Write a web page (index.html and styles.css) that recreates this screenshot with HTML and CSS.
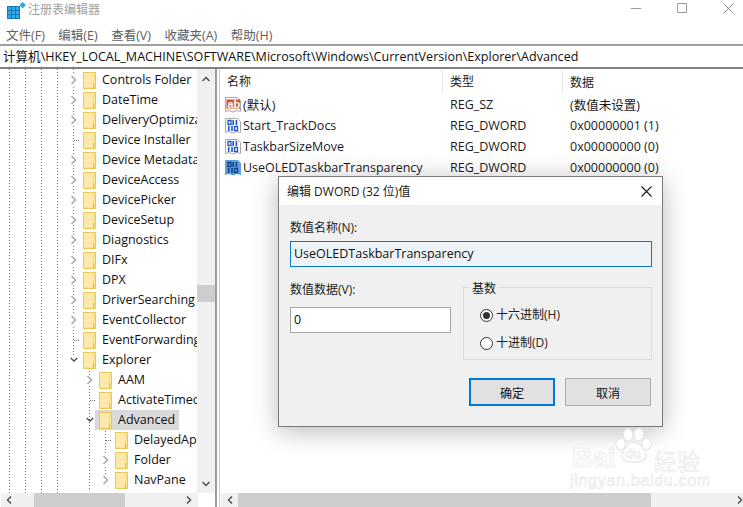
FILE: index.html
```html
<!DOCTYPE html>
<html lang="zh-CN">
<head>
<meta charset="utf-8">
<title>注册表编辑器</title>
<link rel="stylesheet" href="styles.css">
</head>
<body>
<svg class="defs" width="0" height="0">
  <defs>
    <symbol id="folder" viewBox="0 0 13 17">
      <path d="M.5.5H12.5V16.5H.5Z" fill="#fde08e" stroke="#ecc655"/>
      <path d="M1 1H10V15H1Z" fill="#fee9ab"/>
      <path d="M10.5 11V16" stroke="#e5b94a"/>
    </symbol>
    <symbol id="right" viewBox="0 0 8 10"><path d="M1.5 1 5.5 5 1.5 9" fill="none" stroke="#a6a6a6" stroke-width="1.5"/></symbol>
    <symbol id="down" viewBox="0 0 10 8"><path d="M1 1.5 5 5.5 9 1.5" fill="none" stroke="#404040" stroke-width="1.5"/></symbol>
    <symbol id="bin" viewBox="0 0 16 16">
      <path d="M.5.5H12.500L15.500 3.500V14.500L12 13.500 8 15 4 13.500.5 14.500Z" fill="#fff" stroke="#a8a8a8"/>
      <path d="M3 2.500H6V6.500H3ZM9.500 8.500H12.500V12.500H9.500Z" fill="none" stroke="#1f55c8" stroke-width="1.300"/>
      <path d="M7.400 2H9V7H7.400ZM10.600 2H12.200V7H10.600ZM2.900 8H4.500V13H2.900ZM6.200 8H7.800V13H6.200Z" fill="#1f55c8"/>
    </symbol>
    <symbol id="binsel" viewBox="0 0 16 16">
      <path d="M0 0H13L16 3V15L12 14 8 15.500 4 14 0 15Z" fill="#5d9fe0"/>
      <path d="M3 2.500H6V6.500H3ZM9.500 8.500H12.500V12.500H9.500Z" fill="none" stroke="#123f8a" stroke-width="1.300"/>
      <path d="M7.400 2H9V7H7.400ZM10.600 2H12.200V7H10.600ZM2.900 8H4.500V13H2.900ZM6.200 8H7.800V13H6.200Z" fill="#123f8a"/>
    </symbol>
  </defs>
</svg>
<div class="window">
  <header class="titlebar">
    <svg class="appicon" width="19" height="17" viewBox="0 0 19 17">
      <path d="M0 4H13V17H0Z" fill="#0f78c0"/>
      <path d="M1 5H4V8H1ZM5 5H8V8H5ZM9 5H12V8H9ZM1 9H4V12H1ZM5 9H8V12H5ZM9 9H12V12H9ZM1 13H4V16H1ZM5 13H8V16H5ZM9 13H12V16H9Z" fill="#35a9e2"/>
      <path d="M15.500 0 19 3 15.500 6.500 12.500 3Z" fill="#2fa5dc"/>
    </svg>
    <span class="apptitle">注册表编辑器</span>
    <div class="winctl">
      <svg width="11" height="11" viewBox="0 0 11 11"><path d="M0 5.500H10" stroke="#9a9a9a"/></svg>
      <svg width="11" height="11" viewBox="0 0 11 11"><path d="M.5.500H9.500V9.500H.5Z" fill="none" stroke="#9a9a9a"/></svg>
      <svg width="11" height="11" viewBox="0 0 11 11"><path d="M.5.500 10.500 10.500M10.500.500.5 10.500" stroke="#8c8c8c"/></svg>
    </div>
  </header>
  <nav class="menubar">
    <span>文件(F)</span><span>编辑(E)</span><span>查看(V)</span><span>收藏夹(A)</span><span>帮助(H)</span>
  </nav>
  <div class="pathbar">计算机\HKEY_LOCAL_MACHINE\SOFTWARE\Microsoft\Windows\CurrentVersion\Explorer\Advanced</div>
  <main class="panes">
    <section class="treepane">
      <div class="treebody">
        <ul class="tree">
          <li class="lv0"><svg class="chev"><use href="#right"/></svg><svg class="fld"><use href="#folder"/></svg><span>Controls Folder</span></li>
          <li class="lv0"><svg class="chev"><use href="#right"/></svg><svg class="fld"><use href="#folder"/></svg><span>DateTime</span></li>
          <li class="lv0"><svg class="chev"><use href="#right"/></svg><svg class="fld"><use href="#folder"/></svg><span>DeliveryOptimization</span></li>
          <li class="lv0 leaf"><i class="chev"></i><svg class="fld"><use href="#folder"/></svg><span>Device Installer</span></li>
          <li class="lv0"><svg class="chev"><use href="#right"/></svg><svg class="fld"><use href="#folder"/></svg><span>Device Metadata</span></li>
          <li class="lv0"><svg class="chev"><use href="#right"/></svg><svg class="fld"><use href="#folder"/></svg><span>DeviceAccess</span></li>
          <li class="lv0"><svg class="chev"><use href="#right"/></svg><svg class="fld"><use href="#folder"/></svg><span>DevicePicker</span></li>
          <li class="lv0"><svg class="chev"><use href="#right"/></svg><svg class="fld"><use href="#folder"/></svg><span>DeviceSetup</span></li>
          <li class="lv0"><svg class="chev"><use href="#right"/></svg><svg class="fld"><use href="#folder"/></svg><span>Diagnostics</span></li>
          <li class="lv0"><svg class="chev"><use href="#right"/></svg><svg class="fld"><use href="#folder"/></svg><span>DIFx</span></li>
          <li class="lv0"><svg class="chev"><use href="#right"/></svg><svg class="fld"><use href="#folder"/></svg><span>DPX</span></li>
          <li class="lv0"><svg class="chev"><use href="#right"/></svg><svg class="fld"><use href="#folder"/></svg><span>DriverSearching</span></li>
          <li class="lv0"><svg class="chev"><use href="#right"/></svg><svg class="fld"><use href="#folder"/></svg><span>EventCollector</span></li>
          <li class="lv0 leaf"><i class="chev"></i><svg class="fld"><use href="#folder"/></svg><span>EventForwarding</span></li>
          <li class="lv0"><svg class="chev"><use href="#down"/></svg><svg class="fld"><use href="#folder"/></svg><span>Explorer</span></li>
          <li class="lv1"><svg class="chev"><use href="#right"/></svg><svg class="fld"><use href="#folder"/></svg><span>AAM</span></li>
          <li class="lv1 leaf"><i class="chev"></i><svg class="fld"><use href="#folder"/></svg><span>ActivateTimeout</span></li>
          <li class="lv1 sel"><svg class="chev"><use href="#down"/></svg><svg class="fld"><use href="#folder"/></svg><span>Advanced</span></li>
          <li class="lv2 leaf"><i class="chev"></i><svg class="fld"><use href="#folder"/></svg><span>DelayedApps</span></li>
          <li class="lv2"><svg class="chev"><use href="#right"/></svg><svg class="fld"><use href="#folder"/></svg><span>Folder</span></li>
          <li class="lv2"><svg class="chev"><use href="#right"/></svg><svg class="fld"><use href="#folder"/></svg><span>NavPane</span></li>
        </ul>
        <div class="vscroll">
          <svg width="8" height="6" viewBox="0 0 8 6"><path d="M.5 5 4 1.500 7.500 5" fill="none" stroke="#505050" stroke-width="1.500"/></svg>
          <div class="vtrack"><div class="vthumb"></div></div>
          <svg width="8" height="6" viewBox="0 0 8 6"><path d="M.5 1 4 4.500 7.500 1" fill="none" stroke="#505050" stroke-width="1.500"/></svg>
        </div>
      </div>
      <div class="hscroll tree-h">
        <svg width="6" height="8" viewBox="0 0 6 8"><path d="M5 .5 1.500 4 5 7.500" fill="none" stroke="#505050" stroke-width="1.500"/></svg>
        <div class="htrack"><div class="hthumb"></div></div>
        <svg width="6" height="8" viewBox="0 0 6 8"><path d="M1 .5 4.500 4 1 7.500" fill="none" stroke="#505050" stroke-width="1.500"/></svg>
      </div>
    </section>
    <div class="splitter"></div>
    <section class="listpane">
      <div class="listbody">
        <div class="row head"><span class="c1">名称</span><span class="c2">类型</span><span class="c3">数据</span></div>
        <div class="row"><span class="c1"><svg class="vicon" width="16" height="16" viewBox="0 0 16 16"><path d="M.5.5H12.500L15.500 3.500V14.500L12 13.500 8 15 4 13.500.5 14.500Z" fill="#fff" stroke="#a8a8a8"/><path d="M1.500 2.500H15V11.500H1.500Z" fill="#d9512c"/></svg><span class="abmark">ab</span>(默认)</span><span class="c2">REG_SZ</span><span class="c3">(数值未设置)</span></div>
        <div class="row"><span class="c1"><svg class="vicon" width="16" height="16"><use href="#bin"/></svg>Start_TrackDocs</span><span class="c2">REG_DWORD</span><span class="c3">0x00000001 (1)</span></div>
        <div class="row"><span class="c1"><svg class="vicon" width="16" height="16"><use href="#bin"/></svg>TaskbarSizeMove</span><span class="c2">REG_DWORD</span><span class="c3">0x00000000 (0)</span></div>
        <div class="row"><span class="c1"><svg class="vicon" width="16" height="16"><use href="#binsel"/></svg>UseOLEDTaskbarTransparency</span><span class="c2">REG_DWORD</span><span class="c3">0x00000000 (0)</span></div>
      </div>
      <div class="hscroll list-h">
        <svg width="6" height="8" viewBox="0 0 6 8"><path d="M5 .5 1.500 4 5 7.500" fill="none" stroke="#505050" stroke-width="1.500"/></svg>
        <div class="htrack"><div class="hthumb"></div></div>
        <svg width="6" height="8" viewBox="0 0 6 8"><path d="M1 .5 4.500 4 1 7.500" fill="none" stroke="#505050" stroke-width="1.500"/></svg>
      </div>
    </section>
  </main>
</div>

<div class="dialog">
  <div class="dlg-title">
    <span>编辑 DWORD (32 位)值</span>
    <svg width="11" height="11" viewBox="0 0 11 11"><path d="M.5.500 10.500 10.500M10.500.500.5 10.500" stroke="#1a1a1a" stroke-width="1.100"/></svg>
  </div>
  <div class="dlg-body">
    <label class="lbl">数值名称(N):</label>
    <div class="namebox">UseOLEDTaskbarTransparency</div>
    <div class="dlg-mid">
      <div class="datacol">
        <label class="lbl">数值数据(V):</label>
        <div class="databox">0</div>
      </div>
      <fieldset class="base">
        <legend>基数</legend>
        <div class="radio on"><i></i>十六进制(H)</div>
        <div class="radio"><i></i>十进制(D)</div>
      </fieldset>
    </div>
    <div class="dlg-btns">
      <button class="btn primary">确定</button>
      <button class="btn">取消</button>
    </div>
  </div>
</div>

<div class="watermark">
  <svg width="38" height="36" viewBox="0 0 40 38" fill="#fff" stroke="#e6e6e6" stroke-width="1.200">
    <ellipse cx="14" cy="7" rx="5" ry="6.500"/><ellipse cx="25" cy="7" rx="5" ry="6.500"/>
    <ellipse cx="6" cy="17" rx="5" ry="6"/><ellipse cx="33" cy="17" rx="5" ry="6"/>
    <path d="M20 15C27 15 36 28 31 33 27 37 13 37 9 33 4 28 13 15 20 15Z"/>
  </svg>
  <span class="wm-bai">Bai</span><span class="wm-du">du</span><span class="wm-jy">经验</span>
  <span class="wm-url">jingyan.baidu.com</span>
</div>
</body>
</html>
```

FILE: styles.css
```css
* { box-sizing: border-box; }
html, body { margin: 0; height: 100%; }
body {
  width: 743px; height: 507px; overflow: hidden; position: relative; background: #fff;
  font-family: "Open Sans", "Noto Sans CJK SC", sans-serif; font-size: 12.5px; color: #1a1a1a;
}
.defs { position: absolute; }
.window { display: flex; flex-direction: column; height: 507px; }

.titlebar { height: 24px; display: flex; align-items: center; padding-left: 7px; flex: none; }
.appicon { flex: none; margin-top: -3px; }
.apptitle { margin-left: 2px; color: #a0a0a0; font-size: 12px; margin-top: -6px; }
.winctl { margin-left: auto; display: flex; gap: 35px; padding-right: 9px; margin-top: -8px; }

.menubar { height: 22px; display: flex; gap: 13.5px; padding-left: 6px; align-items: center; flex: none; font-size: 12.5px; color: #606060; border-bottom: 2px solid #a0a0a0; }
.pathbar { height: 23px; line-height: 21px; flex: none; padding-left: 3px; font-size: 12.55px; color: #111; white-space: nowrap; border-bottom: 2px solid #7e8284; }

.panes { flex: 1; display: flex; min-height: 0; }
.treepane { width: 215px; flex: none; display: flex; flex-direction: column; }
.treebody { flex: 1; display: flex; min-height: 0; }
.tree {
  list-style: none; margin: 0; padding: 1px 0 0; width: 197px; flex: none; overflow: hidden;
  background:
    repeating-linear-gradient(#777 0 1px, transparent 1px 3px) 9px 0 / 1px 100% no-repeat,
    repeating-linear-gradient(#777 0 1px, transparent 1px 3px) 25px 0 / 1px 100% no-repeat,
    repeating-linear-gradient(#777 0 1px, transparent 1px 3px) 41px 0 / 1px 100% no-repeat,
    repeating-linear-gradient(#777 0 1px, transparent 1px 3px) 57px 0 / 1px 100% no-repeat,
    repeating-linear-gradient(#777 0 1px, transparent 1px 3px) 73px 0 / 1px 292px no-repeat,
    repeating-linear-gradient(#777 0 1px, transparent 1px 3px) 89px 302px / 1px 120px no-repeat,
    repeating-linear-gradient(#777 0 1px, transparent 1px 3px) 105px 362px / 1px 50px no-repeat;
}
.tree li { height: 20px; display: flex; align-items: center; white-space: nowrap; position: relative; }
.lv0 { padding-left: 70px; }
.lv1 { padding-left: 86px; }
.lv2 { padding-left: 102px; }
.chev { width: 8px; height: 10px; flex: none; background: #fff; margin-right: 5px; }
i.chev { background: none; border-bottom: 1px dotted #777; height: 6px; margin-bottom: 5px; margin-left: 4px; width: 5px; margin-right: 4px; }
.fld { width: 13px; height: 17px; flex: none; margin-right: 6px; }
.tree li span { line-height: 20px; color: #111; }
.sel::before { content: ""; position: absolute; left: 95px; top: 0; width: 84px; height: 20px; background: #d9d9d9; }
.sel > * { position: relative; }
.sel .chev { background: none; }

.vscroll { width: 18px; flex: none; background: #f0f0f0; display: flex; flex-direction: column; align-items: center; padding: 7px 0 6px; }
.vtrack { flex: 1; width: 100%; position: relative; margin: 0; }
.vthumb { position: absolute; left: 0; right: 0; top: 203px; height: 17px; background: #cdcdcd; }

.hscroll { height: 14px; flex: none; background: #f0f0f0; display: flex; align-items: center; padding: 0 6px; }
.tree-h { width: 197px; margin-left: 1px; padding-left: 5px; }
.htrack { flex: 1; height: 100%; position: relative; }
.hthumb { position: absolute; top: 0; bottom: 0; left: 22px; width: 91px; background: #cdcdcd; }

.splitter { width: 5px; flex: none; background: #fff; border-left: 2px solid #9b9b9b; border-right: 1px solid #c8c8c8; }

.listpane { flex: 1; display: flex; flex-direction: column; min-width: 0; }
.listbody { flex: 1; padding-top: 1px; }
.row { display: flex; height: 21px; align-items: center; white-space: nowrap; }
.row.head { height: 23px; margin-bottom: 1px; }
.c1 { width: 223px; padding-left: 5px; display: flex; align-items: center; position: relative; flex: none; }
.c2 { width: 120px; padding-left: 7px; flex: none; }
.c3 { padding-left: 7px; }
.head .c1, .head .c2 { border-right: 1px solid #e5e5e5; height: 23px; line-height: 23px; }
.head .c1 { padding-left: 7px; }
.head span { font-size: 12px; color: #222; }
.vicon { margin-right: 2px; flex: none; }
.abmark { position: absolute; left: 7.5px; top: 4px; color: #fff; font: bold 11px/11px "Liberation Sans", sans-serif; }

.list-h { padding: 0 0 0 6px; margin-left: 1px; }
.list-h .hthumb { left: 5px; width: 413px; }

.dialog {
  position: absolute; left: 278px; top: 176px; width: 385px; height: 251px;
  background: #f0f0f0; border: 1px solid #7a7a7a; box-shadow: 0 4px 24px rgba(0,0,0,.28);
  display: flex; flex-direction: column;
}
.dlg-title { height: 28px; background: #fff; display: flex; align-items: center; justify-content: space-between; padding: 0 10px 0 8px; font-size: 12px; flex: none; }
.dlg-body { flex: 1; padding: 13px 10px 0 11px; display: flex; flex-direction: column; }
.lbl { display: block; line-height: 20px; font-size: 12px; color: #222; }
.namebox { height: 26px; width: 362px; margin-top: 3px; background: #eef3f7; border: 1px solid #0b78d0; padding-left: 3px; line-height: 24px; font-size: 12.5px; color: #111; }
.dlg-mid { display: flex; margin-top: 13px; }
.datacol { width: 173px; flex: none; }
.databox { width: 161px; height: 26px; margin-top: 7px; background: #fff; border: 1px solid #a5a5a5; padding-left: 3px; line-height: 24px; color: #111; }
.base { width: 189px; height: 73px; margin: 7px 0 0; padding: 20px 0 0 16px; border: 1px solid #dcdcdc; position: relative; }
.base legend { position: absolute; left: 7px; top: -7px; font-size: 12px; line-height: 16px; padding: 0 1px; background: #f0f0f0; }
.radio { display: flex; align-items: center; font-size: 12px; line-height: 14px; height: 14px; margin-bottom: 14px; color: #222; }
.radio i { width: 13px; height: 13px; border: 1px solid #333; border-radius: 50%; background: #fff; margin-right: 3px; flex: none; position: relative; }
.radio.on i::after { content: ""; position: absolute; left: 2px; top: 2px; width: 7px; height: 7px; border-radius: 50%; background: #333; }
.dlg-btns { display: flex; gap: 10px; justify-content: flex-end; margin-top: 18px; padding-right: 1px; }
.btn { width: 86px; height: 28px; background: #e1e1e1; border: 1px solid #adadad; font: 12px "Noto Sans CJK SC", sans-serif; color: #111; padding: 0; }
.btn.primary { border: 2px solid #0078d7; }

.watermark { position: absolute; left: 570px; top: 427px; width: 132px; height: 64px; }
.watermark svg { position: absolute; left: 45px; top: 1px; }
.watermark span { position: absolute; color: #fbfbfb; -webkit-text-stroke: .6px #e8e8e8; font-family: "Liberation Sans", sans-serif; white-space: nowrap; }
.wm-bai { left: 2px; top: 15px; font-size: 28px; font-weight: bold; }
.wm-du { left: 55px; top: 19px; font-size: 13px; font-weight: bold; }
.watermark .wm-jy { left: 84px; top: 16px; font-size: 23px; font-family: "Noto Sans CJK SC", sans-serif; }
.wm-url { left: 0; top: 45px; font-size: 16px; letter-spacing: .7px; }
```
